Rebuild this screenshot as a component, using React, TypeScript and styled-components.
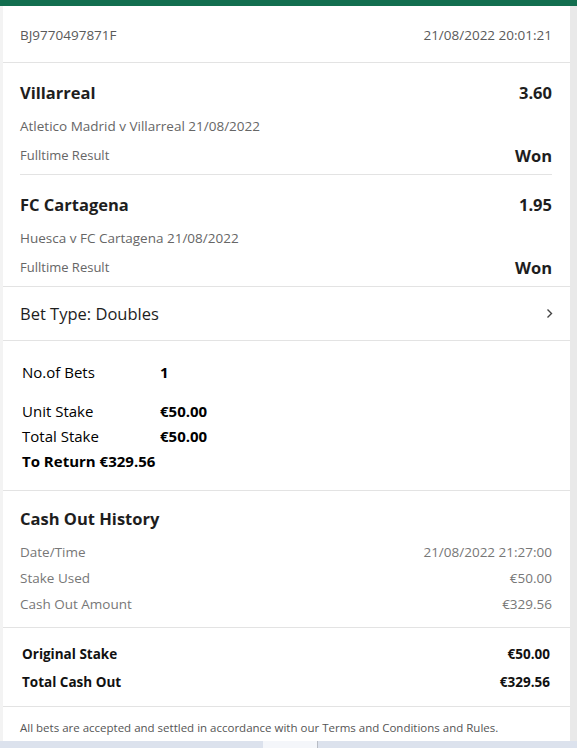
import React from "react";
import styled, { createGlobalStyle } from "styled-components";

const Global = createGlobalStyle`
  html, body { margin: 0; padding: 0; background: #efefef; }
  body { font-family: "Open Sans", "Noto Sans", sans-serif; color: #1e1e1e; }
  * { box-sizing: border-box; }
`;

const Shell = styled.div`
  width: 577px;
  height: 748px;
  display: flex;
  flex-direction: column;
  background: #efefef;
  overflow: hidden;
`;

const TopBar = styled.div`
  height: 6px;
  background: #126e4f;
  flex: none;
`;

const Body = styled.div`
  flex: 1;
  display: flex;
  padding: 0 7px 0 3px;
  background: linear-gradient(to right, #f3f3f3 0 3px, transparent 3px), #e9e9e9;
`;

const Card = styled.div`
  flex: 1;
  background: #fff;
  display: flex;
  flex-direction: column;
`;

const Section = styled.div<{ $pl?: number; $pr?: number }>`
  padding: 0 ${(p) => p.$pr ?? 18}px 0 ${(p) => p.$pl ?? 17}px;
  border-bottom: 1px solid #e3e3e3;
`;

const Header = styled(Section)`
  height: 57px;
  display: flex;
  align-items: center;
  justify-content: space-between;
  font-size: 13.5px;
  color: #5a5a5a;
  padding-top: 2px;
`;

const Selection = styled.div<{ $divider?: boolean }>`
  padding: 17px 0 8px;
  border-bottom: ${(p) => (p.$divider ? "1px solid #e3e3e3" : "none")};
`;

const Row = styled.div`
  display: flex;
  justify-content: space-between;
  align-items: center;
`;

const TitleRow = styled(Row)`
  height: 24px;
  font-size: 16.5px;
  font-weight: 700;
  color: #1e1e1e;
`;

const EventLine = styled.div`
  margin-top: 12px;
  height: 20px;
  line-height: 20px;
  font-size: 13.5px;
  color: #666;
`;

const ResultRow = styled(Row)`
  margin-top: 8px;
  height: 22px;
  font-size: 13px;
  color: #666;
`;

const Status = styled.span`
  font-size: 16.5px;
  font-weight: 700;
  color: #1e1e1e;
`;

const BetType = styled(Section)`
  height: 54px;
  display: flex;
  align-items: center;
  justify-content: space-between;
  font-size: 16.5px;
  color: #1e1e1e;
  padding-right: 17px;
`;

const Stakes = styled(Section)`
  padding-top: 18px;
  padding-bottom: 17px;
  padding-left: 19px;
  color: #000;
`;

const StakeRow = styled.div<{ $gap?: number }>`
  display: flex;
  align-items: center;
  height: 25px;
  margin-top: ${(p) => p.$gap ?? 0}px;
  font-size: 15px;
`;

const StakeLabel = styled.span`
  width: 138px;
`;

const StakeValue = styled.span`
  font-weight: 700;
`;

const ReturnLine = styled.div`
  height: 25px;
  display: flex;
  align-items: center;
  font-size: 15px;
  font-weight: 700;
`;

const History = styled(Section)`
  padding-top: 16px;
  padding-bottom: 10px;
`;

const HistoryTitle = styled.div`
  height: 24px;
  line-height: 24px;
  font-size: 16.5px;
  font-weight: 700;
  margin-bottom: 8px;
`;

const HistoryRow = styled(Row)`
  height: 26px;
  font-size: 13.5px;
  color: #777;
`;

const Totals = styled(Section)`
  padding: 12px 20px 10px 19px;
`;

const TotalRow = styled(Row)`
  height: 28px;
  font-size: 13.5px;
  font-weight: 700;
  color: #111;
`;

const Footer = styled.div`
  padding: 12px 17px 4px;
  height: 34px;
  line-height: 18px;
  font-size: 11.5px;
  color: #555;
`;

const BottomStrip = styled.div`
  height: 7px;
  flex: none;
  background: #dce2ed;
  display: flex;
`;

const StripTab = styled.div`
  margin-left: 263px;
  width: 55px;
  background: #f4f6fa;
  border-right: 1px solid #b8bcc4;
`;

const Chevron = () => (
  <svg width="7" height="11" viewBox="0 0 7 11" fill="none">
    <polyline points="1.5,1.5 5.5,5.5 1.5,9.5" stroke="#444" strokeWidth="1.4" />
  </svg>
);

const selections = [
  { team: "Villarreal", odds: "3.60", event: "Atletico Madrid v Villarreal 21/08/2022" },
  { team: "FC Cartagena", odds: "1.95", event: "Huesca v FC Cartagena 21/08/2022" },
];

export default function App() {
  return (
    <>
      <Global />
      <Shell>
        <TopBar />
        <Body>
          <Card>
            <Header>
              <span>BJ9770497871F</span>
              <span>21/08/2022 20:01:21</span>
            </Header>
            <Section>
              {selections.map((s, i) => (
                <Selection key={s.team} $divider={i < selections.length - 1}>
                  <TitleRow>
                    <span>{s.team}</span>
                    <span>{s.odds}</span>
                  </TitleRow>
                  <EventLine>{s.event}</EventLine>
                  <ResultRow>
                    <span>Fulltime Result</span>
                    <Status>Won</Status>
                  </ResultRow>
                </Selection>
              ))}
            </Section>
            <BetType>
              <span>Bet Type: Doubles</span>
              <Chevron />
            </BetType>
            <Stakes>
              <StakeRow>
                <StakeLabel>No.of Bets</StakeLabel>
                <StakeValue>1</StakeValue>
              </StakeRow>
              <StakeRow $gap={14}>
                <StakeLabel>Unit Stake</StakeLabel>
                <StakeValue>€50.00</StakeValue>
              </StakeRow>
              <StakeRow>
                <StakeLabel>Total Stake</StakeLabel>
                <StakeValue>€50.00</StakeValue>
              </StakeRow>
              <ReturnLine>To Return €329.56</ReturnLine>
            </Stakes>
            <History>
              <HistoryTitle>Cash Out History</HistoryTitle>
              <HistoryRow>
                <span>Date/Time</span>
                <span>21/08/2022 21:27:00</span>
              </HistoryRow>
              <HistoryRow>
                <span>Stake Used</span>
                <span>€50.00</span>
              </HistoryRow>
              <HistoryRow>
                <span>Cash Out Amount</span>
                <span>€329.56</span>
              </HistoryRow>
            </History>
            <Totals>
              <TotalRow>
                <span>Original Stake</span>
                <span>€50.00</span>
              </TotalRow>
              <TotalRow>
                <span>Total Cash Out</span>
                <span>€329.56</span>
              </TotalRow>
            </Totals>
            <Footer>
              All bets are accepted and settled in accordance with our Terms and Conditions and Rules.
            </Footer>
          </Card>
        </Body>
        <BottomStrip>
          <StripTab />
        </BottomStrip>
      </Shell>
    </>
  );
}
